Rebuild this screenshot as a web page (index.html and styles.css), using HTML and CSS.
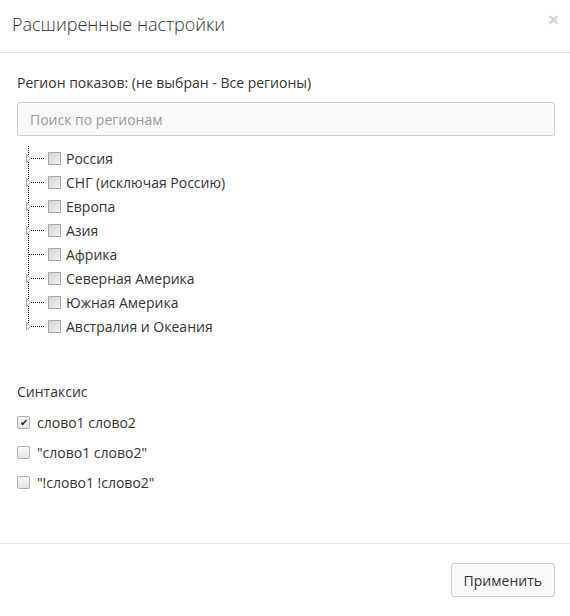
FILE: index.html
```html
<!DOCTYPE html>
<html lang="ru">
<head>
  <meta charset="UTF-8" />
  <title>Расширенные настройки</title>
  <link rel="stylesheet" href="styles.css">
</head>
<body>

<div class="modal">
  <div class="modal-header">
    <h4>Расширенные настройки</h4>
    <button class="close">&times;</button>
  </div>

  <div class="modal-body">
    <div class="label">Регион показов: (не выбран - Все регионы)</div>
    <input type="text" class="search" placeholder="Поиск по регионам" />

    <ul class="tree">
      <li><svg class="branch" width="31" height="24"><line x1="11.5" y1="0" x2="11.5" y2="24" class="dots"/><line x1="14" y1="12.5" x2="28" y2="12.5" class="dots"/><polygon points="9.5,8.5 13.5,12.5 9.5,16.5" class="arrow"/></svg><span class="box"></span>Россия</li>
      <li><svg class="branch" width="31" height="24"><line x1="11.5" y1="0" x2="11.5" y2="24" class="dots"/><line x1="14" y1="12.5" x2="28" y2="12.5" class="dots"/><polygon points="9.5,8.5 13.5,12.5 9.5,16.5" class="arrow"/></svg><span class="box"></span>СНГ (исключая Россию)</li>
      <li><svg class="branch" width="31" height="24"><line x1="11.5" y1="0" x2="11.5" y2="24" class="dots"/><line x1="14" y1="12.5" x2="28" y2="12.5" class="dots"/><polygon points="9.5,8.5 13.5,12.5 9.5,16.5" class="arrow"/></svg><span class="box"></span>Европа</li>
      <li><svg class="branch" width="31" height="24"><line x1="11.5" y1="0" x2="11.5" y2="24" class="dots"/><line x1="14" y1="12.5" x2="28" y2="12.5" class="dots"/><polygon points="9.5,8.5 13.5,12.5 9.5,16.5" class="arrow"/></svg><span class="box"></span>Азия</li>
      <li><svg class="branch" width="31" height="24"><line x1="11.5" y1="0" x2="11.5" y2="24" class="dots"/><line x1="12" y1="12.5" x2="28" y2="12.5" class="dots"/></svg><span class="box"></span>Африка</li>
      <li><svg class="branch" width="31" height="24"><line x1="11.5" y1="0" x2="11.5" y2="24" class="dots"/><line x1="14" y1="12.5" x2="28" y2="12.5" class="dots"/><polygon points="9.5,8.5 13.5,12.5 9.5,16.5" class="arrow"/></svg><span class="box"></span>Северная Америка</li>
      <li><svg class="branch" width="31" height="24"><line x1="11.5" y1="0" x2="11.5" y2="24" class="dots"/><line x1="14" y1="12.5" x2="28" y2="12.5" class="dots"/><polygon points="9.5,8.5 13.5,12.5 9.5,16.5" class="arrow"/></svg><span class="box"></span>Южная Америка</li>
      <li><svg class="branch" width="31" height="24"><line x1="11.5" y1="0" x2="11.5" y2="12" class="dots"/><line x1="14" y1="12.5" x2="28" y2="12.5" class="dots"/><polygon points="9.5,8.5 13.5,12.5 9.5,16.5" class="arrow"/></svg><span class="box"></span>Австралия и Океания</li>
    </ul>

    <div class="label syntax-title">Синтаксис</div>
    <div class="option"><span class="check checked">&#10004;</span>слово1 слово2</div>
    <div class="option"><span class="check"></span>"слово1 слово2"</div>
    <div class="option"><span class="check"></span>"!слово1 !слово2"</div>
  </div>

  <div class="modal-footer">
    <button class="btn">Применить</button>
  </div>
</div>

</body>
</html>
```

FILE: styles.css
```css
body {
  margin: 0;
  font-family: "Open Sans", Arial, sans-serif;
  font-size: 14px;
  color: #333;
  background-color: #fff;
}
.modal {
  width: 570px;
  height: 616px;
  display: flex;
  flex-direction: column;
}
.modal-header {
  height: 52px;
  border-bottom: 1px solid #e5e5e5;
  display: flex;
  justify-content: space-between;
  align-items: center;
  padding: 0 7px 0 12px;
}
.modal-header h4 {
  margin: 0;
  font-size: 18px;
  font-weight: 300;
  color: #333;
  padding-bottom: 4px;
}
.close {
  border: none;
  background: none;
  font-family: Arial, sans-serif;
  font-size: 19px;
  font-weight: bold;
  color: #000;
  opacity: 0.18;
  padding: 0 4px;
  margin-bottom: 12px;
  cursor: pointer;
}
.modal-body {
  flex: 1;
  padding: 20px 15px 0 17px;
}
.label {
  line-height: 20px;
}
.search {
  display: block;
  box-sizing: border-box;
  width: 538px;
  height: 34px;
  margin-top: 9px;
  padding: 0 12px;
  border: 1px solid #ccc;
  border-radius: 3px;
  background-color: #f9f9f9;
  font-family: "Open Sans", Arial, sans-serif;
  font-size: 14px;
  color: #333;
}
.search::placeholder {
  color: #999;
}
.tree {
  list-style: none;
  margin: 10px 0 0;
  padding: 0;
}
.tree li {
  height: 24px;
  display: flex;
  align-items: center;
}
.branch {
  flex: none;
}
.dots {
  stroke: #000;
  stroke-width: 1;
  stroke-dasharray: 1 1;
}
.arrow {
  fill: #fff;
  stroke: #aaa;
  stroke-width: 1;
}
.box {
  width: 11px;
  height: 11px;
  border: 1px solid #a8a8a8;
  background: linear-gradient(135deg, #d4d4d4, #f2f2f2);
  margin-right: 5px;
  flex: none;
}
.syntax-title {
  margin-top: 44px;
  margin-bottom: 10px;
}
.option {
  height: 20px;
  display: flex;
  align-items: center;
  margin-bottom: 10px;
}
.check {
  box-sizing: border-box;
  width: 13px;
  height: 13px;
  border: 1px solid #b0b0b0;
  border-radius: 2px;
  background: linear-gradient(#fafafa, #e4e4e4);
  margin-right: 7px;
  flex: none;
  font-size: 10px;
  line-height: 11px;
  text-align: center;
  color: #222;
}
.modal-footer {
  border-top: 1px solid #e5e5e5;
  padding: 19px 15px 19px;
  display: flex;
  justify-content: flex-end;
}
.btn {
  height: 34px;
  padding: 0 12px;
  border: 1px solid #ccc;
  border-radius: 3px;
  background-color: #f9f9f9;
  font-family: "Open Sans", Arial, sans-serif;
  font-size: 14px;
  color: #333;
  cursor: pointer;
}
```
